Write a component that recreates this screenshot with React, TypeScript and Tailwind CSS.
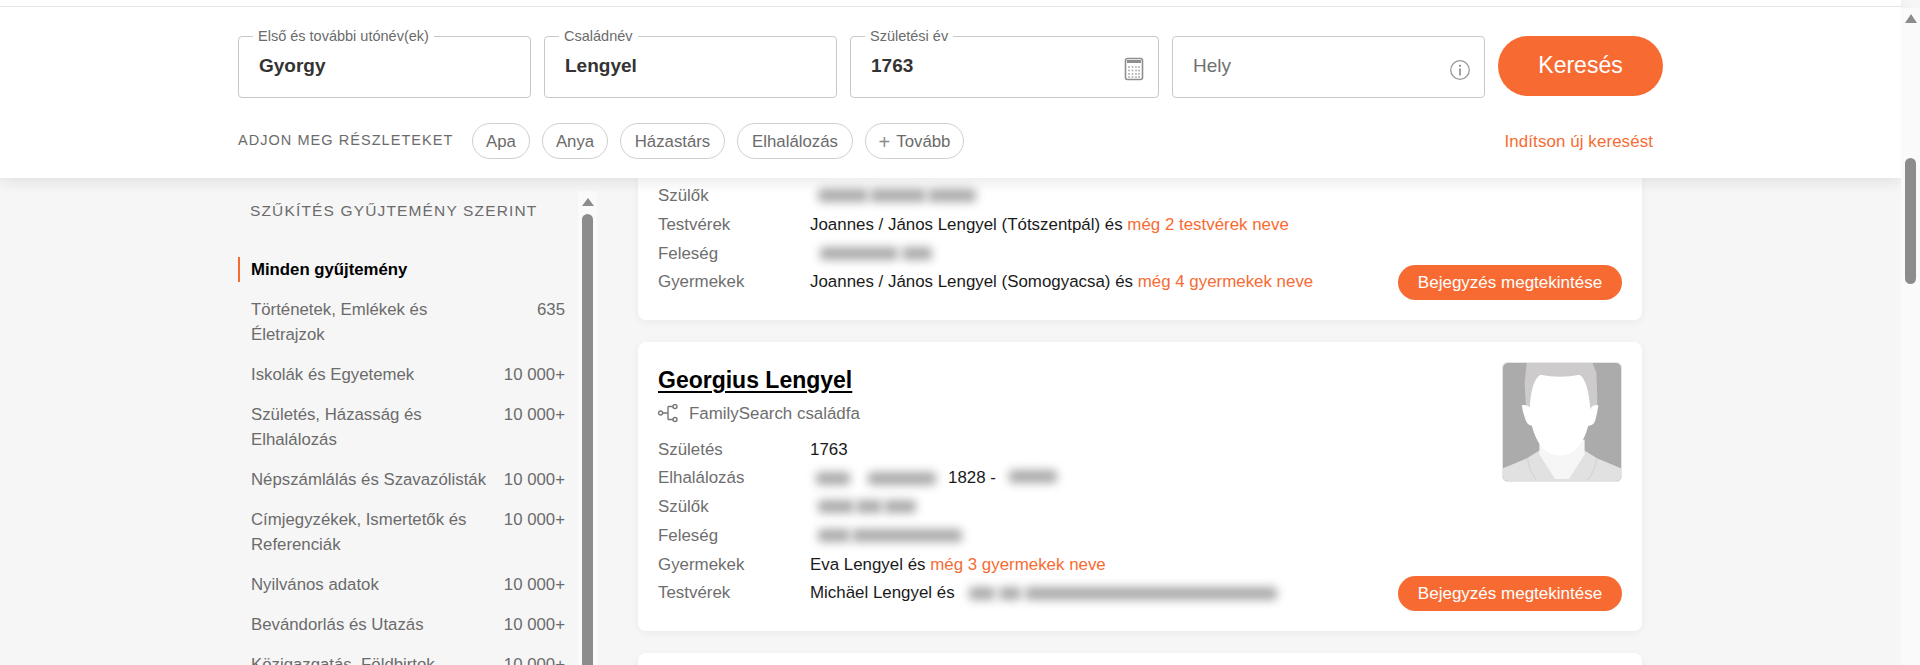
const sans = "font-['Liberation_Sans',Arial,sans-serif]";

function Field({ label, value, placeholder, width, icon }: { label?: string; value?: string; placeholder?: string; width: string; icon?: React.ReactNode }) {
  return (
    <div className={`relative h-[62px] rounded-[4px] border border-[#c8c8c8] flex items-center justify-between pl-[20px] pr-[7px] ${width}`}>
      {label && (
        <span className="absolute -top-[9px] left-[14px] bg-white px-[5px] text-[14.5px] leading-[16px] text-[#6b6b6b]">
          {label}
        </span>
      )}
      {value ? (
        <span className="-translate-y-px text-[19px] font-bold text-[#333]">{value}</span>
      ) : (
        <span className="-translate-y-px text-[19px] text-[#707070]">{placeholder}</span>
      )}
      {icon}
    </div>
  );
}

function Chip({ children, width }: { children: React.ReactNode; width: string }) {
  return (
    <span className={`flex h-[36px] items-center justify-center rounded-full border border-[#cfcfcf] pt-px text-[16.8px] text-[#6b6b6b] ${width}`}>
      {children}
    </span>
  );
}

function CalculatorIcon() {
  return (
    <svg width="20" height="24" viewBox="0 0 20 24" className="mr-[7px] translate-y-[2px]">
      <rect x="1.5" y="1.5" width="17" height="21" rx="2" fill="none" stroke="#8f8f8f" strokeWidth="1.6" />
      <rect x="3" y="3" width="14" height="3" fill="#8f8f8f" />
      {[10, 13.5, 17, 20].map((y) =>
        [5, 8.5, 12, 15].map((x) => <rect key={`${x}-${y}`} x={x - 0.8} y={y - 0.8} width="1.6" height="1.6" fill="#a5a5a5" />),
      )}
    </svg>
  );
}

function InfoIcon() {
  return (
    <svg width="22" height="22" viewBox="0 0 22 22" className="mr-[6px] translate-y-[3px]">
      <circle cx="11" cy="11" r="9.3" fill="none" stroke="#9a9a9a" strokeWidth="1.3" />
      <circle cx="11" cy="6.8" r="1.1" fill="#8a8a8a" />
      <rect x="10.2" y="9.5" width="1.6" height="7" fill="#8a8a8a" />
    </svg>
  );
}

function TreeIcon() {
  return (
    <svg width="20" height="20" viewBox="0 0 20 20" className="shrink-0">
      <g fill="none" stroke="#777" strokeWidth="1.4">
        <circle cx="2.6" cy="9" r="2" />
        <circle cx="17" cy="2.5" r="2" />
        <circle cx="17" cy="15.5" r="2" />
        <path d="M4.7 9h5.3M10 2.5v13M10 2.5h5M10 15.5h5" />
      </g>
    </svg>
  );
}

function Avatar() {
  return (
    <svg viewBox="0 0 120 120" className="h-[120px] w-[120px] shrink-0 rounded-[6px] border border-[#e6e6e6] bg-[#ababab]">
      <path d="M0 107 L24 97 L37 89 H83 L96 97 L120 107 V120 H0Z" fill="#e2e1e2" />
      <path d="M37 78 H83 V93 L67 118 H53 L37 93Z" fill="#f6f6f6" />
      <path d="M24 0 H91 L95 10 L96 40 L92 62 L28 62 L23 40 L22 20Z" fill="#cdcbcc" />
      <path d="M19 43 Q25 42 28 46 L31 64 Q25 64 23 58 Q20 50 19 43Z M97 43 Q92 42 89 46 L86 64 Q92 64 94 58 Q96 50 97 43Z" fill="#fff" />
      <path d="M38 12 Q58 16 78 12 Q87 18 89 50 Q86 78 72 90 Q58 98 44 90 Q30 78 27 50 Q28 18 38 12Z" fill="#fff" />
      <path d="M25 97 Q26 109 34 119 M95 97 Q94 109 86 119" fill="none" stroke="#cfcfcf" strokeWidth="1" />
    </svg>
  );
}

function Blur({ w, className = "" }: { w: string; className?: string }) {
  return <span className={`inline-block h-[13px] rounded-sm bg-[#aaaaaa] blur-[5px] ${w} ${className}`} />;
}

function Row({ label, children }: { label: string; children: React.ReactNode }) {
  return (
    <div className="flex h-[28.75px] items-center text-[16.9px]">
      <span className="w-[152px] shrink-0 text-[#6e6e6e]">{label}</span>
      <span className="flex items-center whitespace-pre text-[#1a1a1a]">{children}</span>
    </div>
  );
}

function ViewButton() {
  return (
    <button className="absolute bottom-[20px] right-[20px] h-[35px] w-[224px] rounded-full bg-[#f76b33] text-[17px] text-white">
      Bejegyzés megtekintése
    </button>
  );
}

const collections: [string, string][] = [
  ["Történetek, Emlékek és Életrajzok", "635"],
  ["Iskolák és Egyetemek", "10 000+"],
  ["Születés, Házasság és Elhalálozás", "10 000+"],
  ["Népszámlálás és Szavazólisták", "10 000+"],
  ["Címjegyzékek, Ismertetők és Referenciák", "10 000+"],
  ["Nyilvános adatok", "10 000+"],
  ["Bevándorlás és Utazás", "10 000+"],
  ["Közigazgatás, Földbirtok", "10 000+"],
];

export default function App() {
  return (
    <div className={`flex h-[665px] w-[1920px] overflow-hidden bg-[#f6f6f6] ${sans}`}>
      <div className="flex w-[1901px] flex-col">
        <header className="relative z-10 h-[178px] shrink-0 border-t-[7px] border-white bg-white shadow-[0_4px_14px_rgba(0,0,0,0.09)]">
          <div className="-mt-px h-px bg-[#e4e4e4]" />
          <div className="flex gap-[13px] pl-[238px] pt-[29px]">
            <Field label="Első és további utónév(ek)" value="Gyorgy" width="w-[293px]" />
            <Field label="Családnév" value="Lengyel" width="w-[293px]" />
            <Field label="Születési év" value="1763" width="w-[309px]" icon={<CalculatorIcon />} />
            <Field placeholder="Hely" width="w-[313px]" icon={<InfoIcon />} />
            <button className="h-[60px] w-[165px] rounded-full bg-[#f76b33] pb-[2px] text-[23px] text-white">Keresés</button>
          </div>
          <div className="mt-[25px] flex items-center pl-[238px] pr-[248px]">
            <span className="w-[234px] text-[14.5px] tracking-[1.05px] text-[#6b6b6b]">ADJON MEG RÉSZLETEKET</span>
            <div className="flex gap-[12px]">
              <Chip width="w-[58px]">Apa</Chip>
              <Chip width="w-[66px]">Anya</Chip>
              <Chip width="w-[105px]">Házastárs</Chip>
              <Chip width="w-[116px]">Elhalálozás</Chip>
              <Chip width="w-[99px]">
                <span className="mr-[6px] text-[20px] leading-none text-[#8a8a8a]">+</span>Tovább
              </Chip>
            </div>
            <a className="ml-auto pt-[2px] text-[16.9px] tracking-[0.1px] text-[#f76b33]">Indítson új keresést</a>
          </div>
        </header>

        <div className="flex min-h-0 flex-1 overflow-hidden">
          <aside className="flex w-[638px] shrink-0 pl-[238px]">
            <div className="w-[340px] shrink-0 pt-[23px]">
              <h2 className="pl-[12px] text-[15.5px] leading-[20px] tracking-[1.15px] text-[#6b6b6b]">SZŰKÍTÉS GYŰJTEMÉNY SZERINT</h2>
              <div className="mt-[36px] h-[25px] border-l-2 border-[#f76b33] pl-[11px] text-[16.75px] font-bold leading-[25px] text-black">
                Minden gyűjtemény
              </div>
              <ul className="mt-[15px] flex flex-col gap-[15px] pl-[13px] pr-[13px] text-[16.8px] leading-[25px] text-[#6b6b6b]">
                {collections.map(([name, count]) => (
                  <li key={name} className="flex items-start justify-between">
                    <span className="w-[245px]">{name}</span>
                    <span>{count}</span>
                  </li>
                ))}
              </ul>
            </div>
            <div className="mt-[13px] flex h-[600px] w-[19px] shrink-0 flex-col items-center bg-[#fafafa]">
              <span className="mt-[7px] h-0 w-0 border-x-[6.5px] border-b-[8px] border-x-transparent border-b-[#8c8c8c]" />
              <span className="mt-[8px] h-[520px] w-[11px] rounded-full bg-[#8c8c8c]" />
            </div>
          </aside>

          <main className="flex w-[1004px] shrink-0 flex-col gap-[22px]">
            <section className="relative h-[142px] shrink-0 rounded-b-[8px] bg-white px-[20px] pt-[3.5px] shadow-[0_2px_8px_rgba(0,0,0,0.05)]">
              <Row label="Szülők">
                <span className="flex gap-[2px] pl-[8px]">
                  <Blur w="w-[50px]" />
                  <Blur w="w-[56px]" />
                  <Blur w="w-[48px]" />
                </span>
              </Row>
              <Row label="Testvérek">
                Joannes / János Lengyel (Tótszentpál) és <span className="text-[#f76b33]">még 2 testvérek neve</span>
              </Row>
              <Row label="Feleség">
                <span className="flex gap-[4px] pl-[10px]">
                  <Blur w="w-[78px]" />
                  <Blur w="w-[30px]" />
                </span>
              </Row>
              <Row label="Gyermekek">
                Joannes / János Lengyel (Somogyacsa) és <span className="text-[#f76b33]">még 4 gyermekek neve</span>
              </Row>
              <ViewButton />
            </section>

            <section className="relative h-[289px] shrink-0 rounded-[8px] bg-white px-[20px] pt-[20px] shadow-[0_2px_8px_rgba(0,0,0,0.05)]">
              <div className="absolute right-[20px] top-[20px]">
                <Avatar />
              </div>
              <h3 className="text-[23px] font-bold leading-[36px] text-black underline decoration-2 underline-offset-[3px]">Georgius Lengyel</h3>
              <div className="mt-[6px] flex h-[20px] items-center gap-[11px] text-[16.9px] text-[#6e6e6e]">
                <TreeIcon />
                FamilySearch családfa
              </div>
              <div className="mt-[11px]">
                <Row label="Születés">1763</Row>
                <Row label="Elhalálozás">
                  <span className="flex gap-[18px] pl-[6px]">
                    <Blur w="w-[34px]" />
                    <Blur w="w-[68px]" />
                  </span>
                  <span className="pl-[12px]">1828 - </span>
                  <span className="pl-[8px]">
                    <Blur w="w-[48px]" />
                  </span>
                </Row>
                <Row label="Szülők">
                  <span className="flex gap-[2px] pl-[8px]">
                    <Blur w="w-[36px]" />
                    <Blur w="w-[26px]" />
                    <Blur w="w-[32px]" />
                  </span>
                </Row>
                <Row label="Feleség">
                  <span className="flex gap-[2px] pl-[8px]">
                    <Blur w="w-[32px]" />
                    <Blur w="w-[110px]" />
                  </span>
                </Row>
                <Row label="Gyermekek">
                  Eva Lengyel és <span className="text-[#f76b33]">még 3 gyermekek neve</span>
                </Row>
                <Row label="Testvérek">
                  Michäel Lengyel és
                  <span className="flex gap-[4px] pl-[14px]">
                    <Blur w="w-[26px]" />
                    <Blur w="w-[22px]" />
                    <Blur w="w-[252px]" />
                  </span>
                </Row>
              </div>
              <ViewButton />
            </section>

            <section className="h-[200px] shrink-0 rounded-[8px] bg-white shadow-[0_2px_8px_rgba(0,0,0,0.05)]" />
          </main>
        </div>
      </div>

      <div className="z-20 mt-[8px] flex w-[19px] shrink-0 flex-col items-center bg-[#fafafa]">
        <span className="mt-[6px] h-0 w-0 border-x-[6.5px] border-b-[9px] border-x-transparent border-b-[#8c8c8c]" />
        <span className="mt-[135px] h-[126px] w-[11px] rounded-full bg-[#8c8c8c]" />
      </div>
    </div>
  );
}
